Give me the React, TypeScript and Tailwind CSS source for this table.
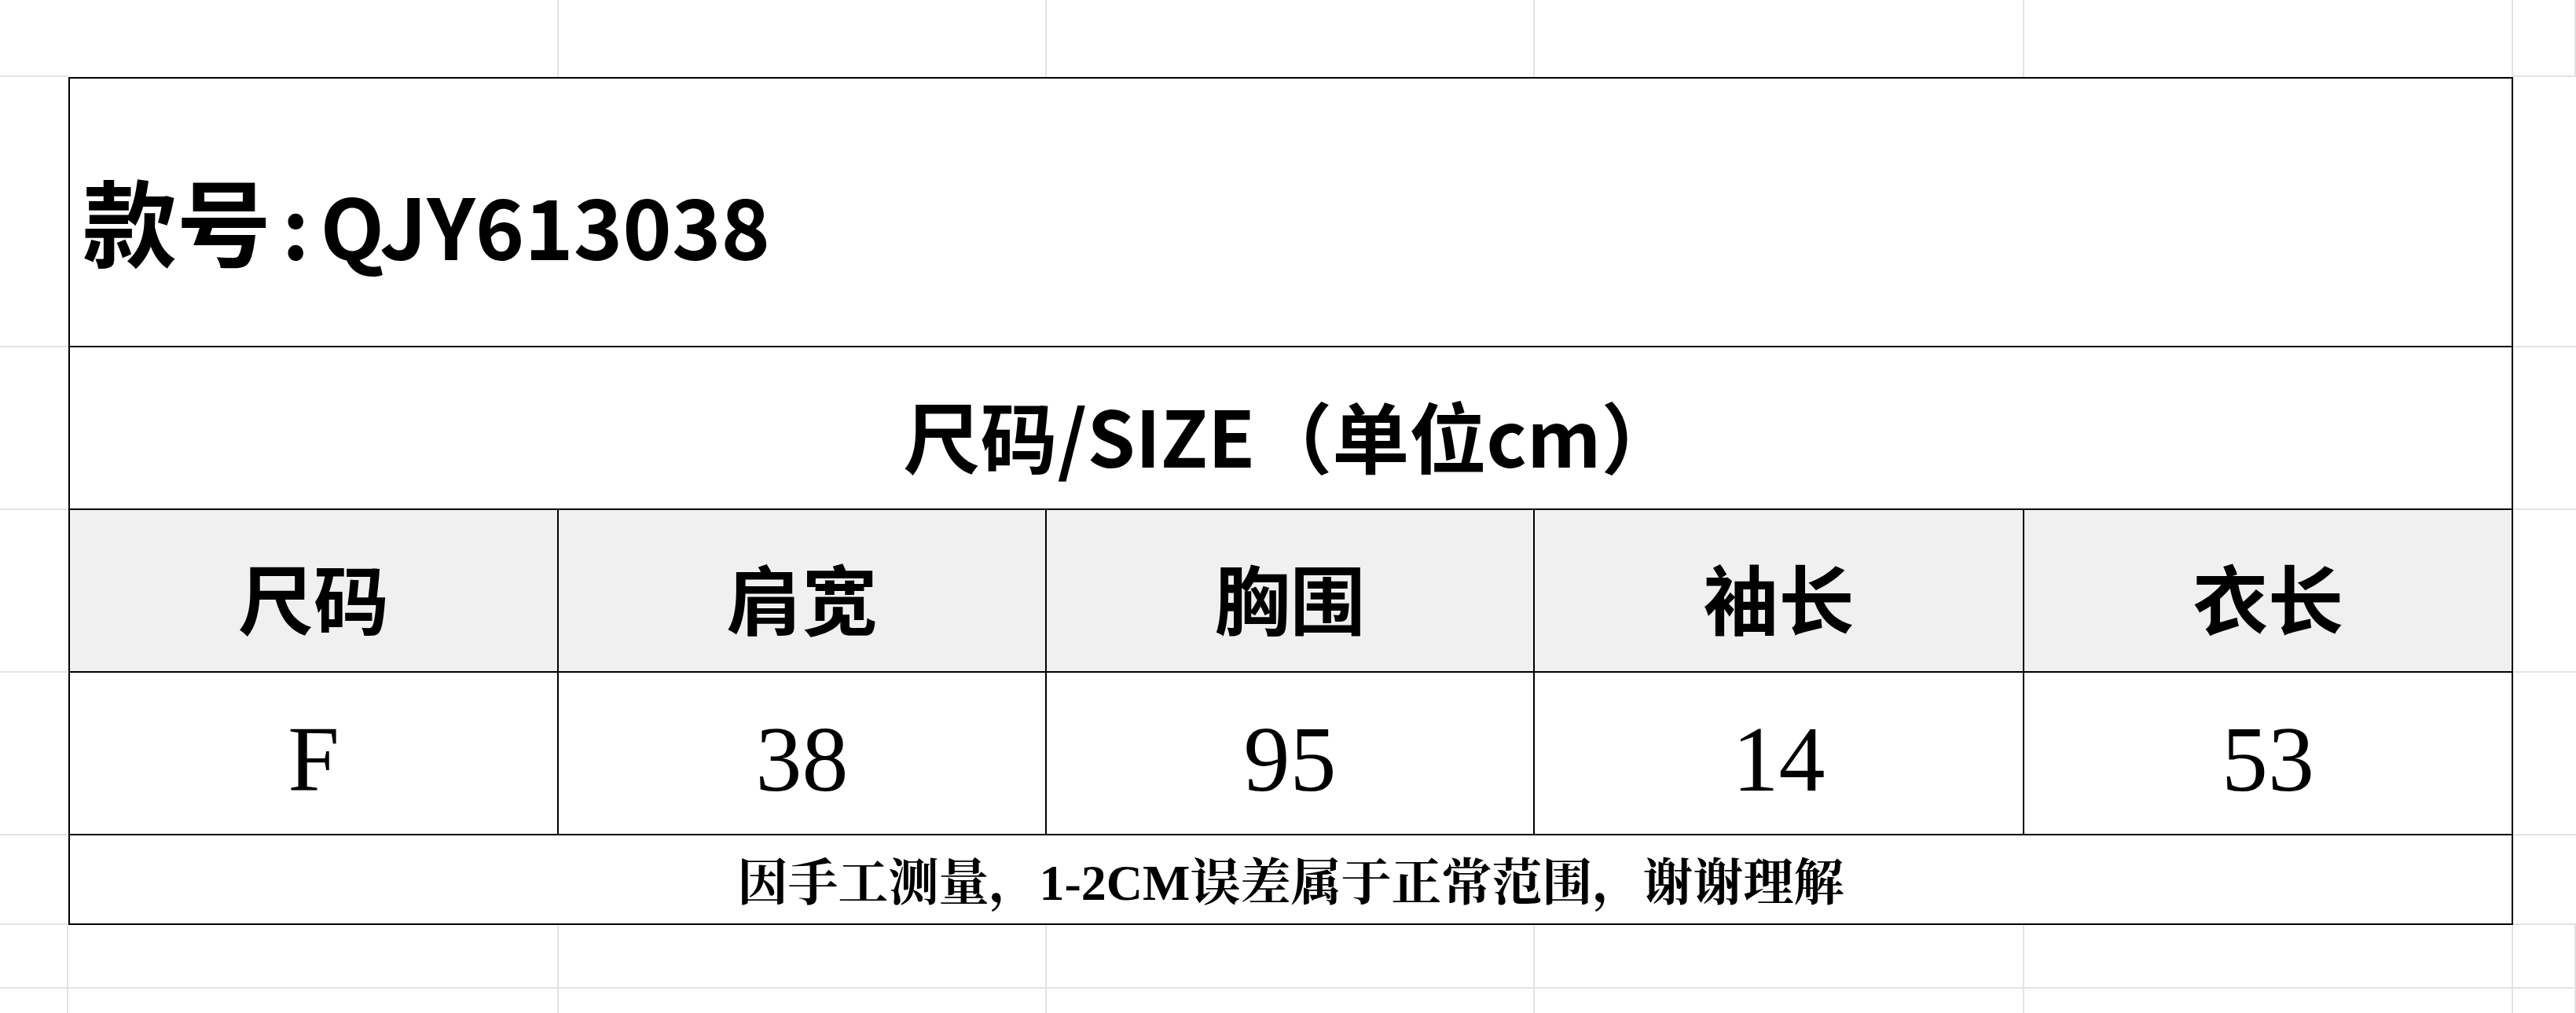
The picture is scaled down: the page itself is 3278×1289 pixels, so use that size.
import React from 'react';

const sans = 'font-["Noto_Sans_CJK_SC","Noto_Sans",sans-serif]';
const serif = 'font-["Liberation_Serif","Noto_Serif_CJK_SC","Noto_Sans_CJK_SC",serif]';

const headers = ['尺码', '肩宽', '胸围', '袖长', '衣长'];
const values = ['F', '38', '95', '14', '53'];

// spreadsheet cells around the size table
const GridCell = ({ right = true, bottom = true }: { right?: boolean; bottom?: boolean }) => (
  <div
    className={`border-[#e3e3e3] ${right ? 'border-r-2' : ''} ${bottom ? 'border-b-2' : ''}`}
  />
);

const SizeTable = () => {
  return (
    <div className="col-start-2 col-end-7 row-start-2 row-end-7 grid grid-cols-[622px_621px_621px_623px_1fr] grid-rows-[342px_207px_207px_207px_1fr] border-2 border-black bg-white text-black">
      <div className={`col-span-5 flex items-center border-b-2 border-black pl-[16px] pt-[18px] ${sans}`}>
        <span className="text-[120px] font-bold leading-none">
          款号
          <span className="text-[106px]">
            <span className="mx-[14px]">:</span>QJY613038
          </span>
        </span>
      </div>

      <div className={`col-span-5 flex items-center justify-center border-b-2 border-black pt-[14px] ${sans}`}>
        <span className="text-[98px] font-bold leading-none">尺码/SIZE（单位cm）</span>
      </div>

      {headers.map((h, i) => (
        <div
          key={h + i}
          className={`flex items-center justify-center border-b-2 border-black bg-[#f0f0f0] pt-[14px] ${
            i < 4 ? 'border-r-2' : ''
          } ${sans}`}
        >
          <span className="text-[96px] font-bold leading-none">{h}</span>
        </div>
      ))}

      {values.map((v, i) => (
        <div
          key={v + i}
          className={`flex items-center justify-center border-b-2 border-black pt-[16px] ${
            i < 4 ? 'border-r-2' : ''
          } font-["Liberation_Serif",serif]`}
        >
          <span className="text-[118px] leading-none">{v}</span>
        </div>
      ))}

      <div className={`col-span-5 flex items-center justify-center pt-[10px] ${serif}`}>
        <span className="text-[64px] font-bold leading-none">
          因手工测量，1-2CM误差属于正常范围，谢谢理解
        </span>
      </div>
    </div>
  );
};

const App = () => {
  return (
    <div className="grid h-[1289px] w-[3278px] grid-cols-[87px_624px_621px_621px_623px_622px_1fr] grid-rows-[98px_344px_207px_207px_207px_114px_81px_1fr] overflow-hidden bg-white">
      {/* top row */}
      <GridCell right={false} />
      <GridCell bottom={false} />
      <GridCell bottom={false} />
      <GridCell bottom={false} />
      <GridCell bottom={false} />
      <GridCell bottom={false} />
      <GridCell />

      {/* left and right margins beside the table */}
      <div className="col-start-1 row-start-2 border-b-2 border-[#e3e3e3]" />
      <div className="col-start-7 row-start-2 border-b-2 border-[#e3e3e3]" />
      <div className="col-start-1 row-start-3 border-b-2 border-[#e3e3e3]" />
      <div className="col-start-7 row-start-3 border-b-2 border-[#e3e3e3]" />
      <div className="col-start-1 row-start-4 border-b-2 border-[#e3e3e3]" />
      <div className="col-start-7 row-start-4 border-b-2 border-[#e3e3e3]" />
      <div className="col-start-1 row-start-5 border-b-2 border-[#e3e3e3]" />
      <div className="col-start-7 row-start-5 border-b-2 border-[#e3e3e3]" />
      <div className="col-start-1 row-start-6 border-b-2 border-[#e3e3e3]" />
      <div className="col-start-7 row-start-6 border-b-2 border-[#e3e3e3]" />

      <SizeTable />

      {/* rows below */}
      {[0, 1, 2, 3, 4, 5, 6].map((c) => (
        <GridCell key={'a' + c} />
      ))}
      {[0, 1, 2, 3, 4, 5, 6].map((c) => (
        <GridCell key={'b' + c} bottom={false} />
      ))}
    </div>
  );
};

export default App;
